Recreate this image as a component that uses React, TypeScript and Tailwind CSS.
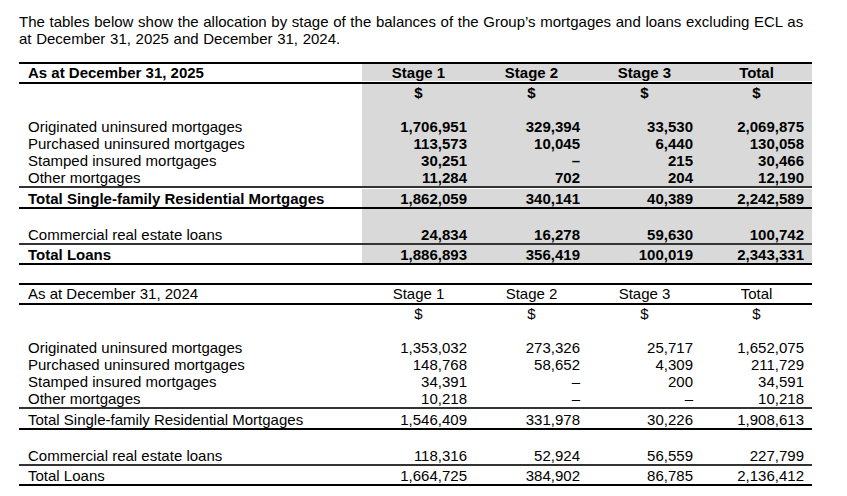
import React from "react";

/**
 * Stage allocation tables (mortgages and loans excluding ECL)
 */

type Line = { label: string; values: string[] };

const t2025 = {
  title: "As at December 31, 2025",
  items: [
    { label: "Originated uninsured mortgages", values: ["1,706,951", "329,394", "33,530", "2,069,875"] },
    { label: "Purchased uninsured mortgages", values: ["113,573", "10,045", "6,440", "130,058"] },
    { label: "Stamped insured mortgages", values: ["30,251", "–", "215", "30,466"] },
    { label: "Other mortgages", values: ["11,284", "702", "204", "12,190"] },
  ],
  sfrm: ["1,862,059", "340,141", "40,389", "2,242,589"],
  commercial: ["24,834", "16,278", "59,630", "100,742"],
  loans: ["1,886,893", "356,419", "100,019", "2,343,331"],
};

const t2024 = {
  title: "As at December 31, 2024",
  items: [
    { label: "Originated uninsured mortgages", values: ["1,353,032", "273,326", "25,717", "1,652,075"] },
    { label: "Purchased uninsured mortgages", values: ["148,768", "58,652", "4,309", "211,729"] },
    { label: "Stamped insured mortgages", values: ["34,391", "–", "200", "34,591"] },
    { label: "Other mortgages", values: ["10,218", "–", "–", "10,218"] },
  ],
  sfrm: ["1,546,409", "331,978", "30,226", "1,908,613"],
  commercial: ["118,316", "52,924", "56,559", "227,799"],
  loans: ["1,664,725", "384,902", "86,785", "2,136,412"],
};

const cols = "grid grid-cols-[343px_113px_113px_113px_111px]";

const Row = ({
  label,
  values,
  shaded,
  boldLabel,
  center,
  className = "",
}: {
  label: string;
  values: string[];
  shaded: boolean;
  boldLabel?: boolean;
  center?: boolean;
  className?: string;
}) => (
  <div className={`${cols} ${className}`}>
    <div className={`flex items-center pl-[9px] whitespace-nowrap ${boldLabel ? "font-bold" : "font-normal"}`}>
      {label}
    </div>
    {values.map((v, i) => (
      <div
        key={i}
        className={`flex items-center whitespace-nowrap ${
          center ? "justify-center" : "justify-end pr-[8px]"
        } ${shaded ? "bg-[#d9d9d9] font-bold" : ""}`}
      >
        {v}
      </div>
    ))}
  </div>
);

const StageTable = ({ data, bold }: { data: typeof t2025; bold: boolean }) => {
  const empty = ["", "", "", ""];
  return (
    <div className="w-[793px] leading-[17px]">
      <Row
        label={data.title}
        values={["Stage 1", "Stage 2", "Stage 3", "Total"]}
        shaded={bold}
        boldLabel={bold}
        center
        className="h-[22px] border-y-2 border-black pb-[1px]"
      />
      <Row label="" values={["$", "$", "$", "$"]} shaded={bold} center className="h-[17px]" />
      <Row label="" values={empty} shaded={bold} className="h-[17px]" />
      {data.items.map((it: Line) => (
        <Row key={it.label} label={it.label} values={it.values} shaded={bold} className="h-[17px]" />
      ))}
      <Row
        label="Total Single-family Residential Mortgages"
        values={data.sfrm}
        shaded={bold}
        boldLabel={bold}
        className="h-[23px] border-t-2 border-t-[#333] border-b-2 border-b-black pt-[1px]"
      />
      <Row label="" values={empty} shaded={bold} className="h-[17px]" />
      <Row label="Commercial real estate loans" values={data.commercial} shaded={bold} className="h-[17px]" />
      <Row
        label="Total Loans"
        values={data.loans}
        shaded={bold}
        boldLabel={bold}
        className="h-[22px] border-t-2 border-t-[#333] border-b-2 border-b-black"
      />
    </div>
  );
};

export default function App() {
  return (
    <div className="w-[847px] h-[496px] bg-white text-black text-[15px] font-['Liberation_Sans',Arial,sans-serif] pl-[19px] pt-[13px]">
      <p className="leading-[17px] [word-spacing:0.5px] whitespace-nowrap">
        The tables below show the allocation by stage of the balances of the Group’s mortgages and loans excluding ECL as
        <br />
        at December 31, 2025 and December 31, 2024.
      </p>
      <div className="mt-[15px]">
        <StageTable data={t2025} bold />
      </div>
      <div className="mt-[18px]">
        <StageTable data={t2024} bold={false} />
      </div>
    </div>
  );
}
